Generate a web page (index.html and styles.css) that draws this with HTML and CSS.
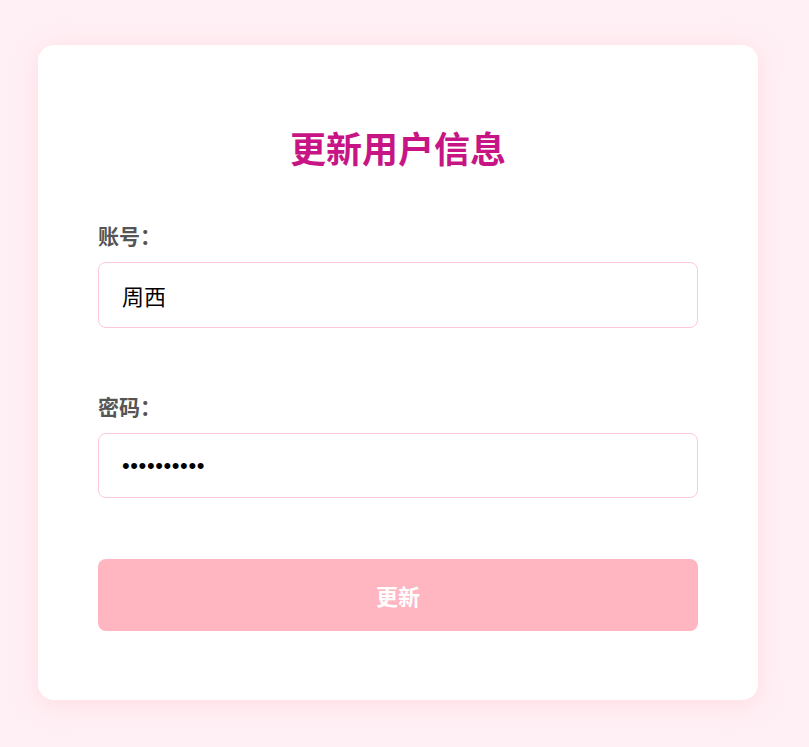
FILE: index.html
```html
<!DOCTYPE html>
<html lang="zh">
<head>
<meta charset="utf-8">
<title>更新用户信息</title>
<link rel="stylesheet" href="styles.css">
</head>
<body>
<div class="card">
  <h2 class="title">更新用户信息</h2>
  <form class="form">
    <div class="field">
      <label class="label">账号：</label>
      <input class="input" type="text" value="周西">
    </div>
    <div class="field">
      <label class="label">密码：</label>
      <input class="input input-pass" type="password" value="1234567890">
    </div>
    <button class="btn" type="button">更新</button>
  </form>
</div>
</body>
</html>
```
FILE: styles.css
```css
html, body {
  margin: 0;
  padding: 0;
}
body {
  background: #fff0f5;
  font-family: "Noto Sans CJK SC", "Noto Sans", sans-serif;
  padding: 45px 0 0 38px;
  min-height: 747px;
  box-sizing: border-box;
}
.card {
  width: 720px;
  box-sizing: border-box;
  background: #ffffff;
  border-radius: 16px;
  padding: 60px 60px 69px;
  box-shadow: 0 4px 24px rgba(255, 182, 193, 0.35);
}
.title {
  margin: 21px 0 53px;
  text-align: center;
  font-size: 36px;
  line-height: 42px;
  font-weight: 700;
  color: #c71585;
}
.form {
  display: flex;
  flex-direction: column;
}
.field {
  display: flex;
  flex-direction: column;
  gap: 12px;
  margin-bottom: 64px;
}
.field + .field {
  margin-bottom: 61px;
}
.label {
  font-size: 21px;
  line-height: 29px;
  font-weight: 600;
  color: #555555;
}
.input {
  height: 66px;
  box-sizing: border-box;
  border: 1px solid #ffc8d6;
  border-radius: 8px;
  padding: 0 23px;
  font-family: "Liberation Sans", "Noto Sans CJK SC", sans-serif;
  font-size: 22px;
  color: #000;
  outline: none;
}
.input-pass {
  height: 65px;
  letter-spacing: 0.6px;
}
.btn {
  height: 72px;
  border: none;
  border-radius: 8px;
  background: #ffb6c1;
  color: #ffffff;
  font-family: "Noto Sans CJK SC", "Noto Sans", sans-serif;
  font-size: 22px;
  font-weight: 600;
}
```
